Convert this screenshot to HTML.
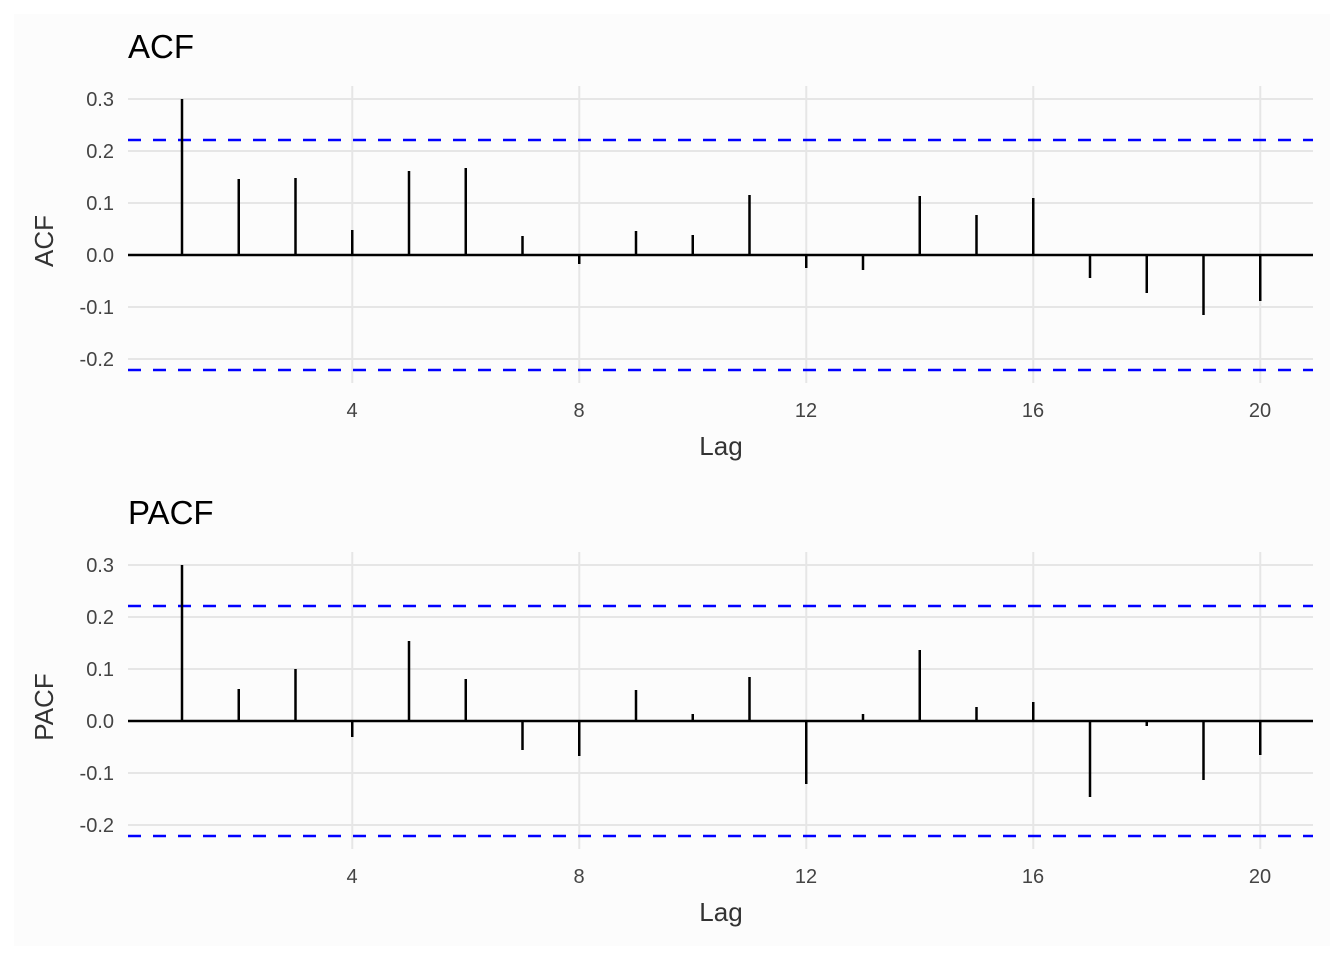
<!DOCTYPE html>
<html><head><meta charset="utf-8"><style>
html,body{margin:0;padding:0;background:#fff;}
svg{display:block;}
text{font-family:"Liberation Sans",sans-serif;}
</style></head><body>
<svg width="1344" height="960" viewBox="0 0 1344 960" xmlns="http://www.w3.org/2000/svg">
<rect x="0" y="0" width="1344" height="960" fill="#fff"/>
<rect x="14" y="14" width="1316" height="932" fill="#fcfcfc"/>
<defs>
<g id="grid">
  <g stroke="#e6e6e6" stroke-width="2">
    <line x1="128" x2="1313" y1="99" y2="99"/>
    <line x1="128" x2="1313" y1="151" y2="151"/>
    <line x1="128" x2="1313" y1="203" y2="203"/>
    <line x1="128" x2="1313" y1="307" y2="307"/>
    <line x1="128" x2="1313" y1="359" y2="359"/>
    <line x1="352.25" x2="352.25" y1="86" y2="383"/>
    <line x1="579.25" x2="579.25" y1="86" y2="383"/>
    <line x1="806.25" x2="806.25" y1="86" y2="383"/>
    <line x1="1033.25" x2="1033.25" y1="86" y2="383"/>
    <line x1="1260.25" x2="1260.25" y1="86" y2="383"/>
  </g>
  <g fill="#444" font-size="20" text-anchor="end">
    <text x="114" y="106">0.3</text>
    <text x="114" y="158">0.2</text>
    <text x="114" y="210">0.1</text>
    <text x="114" y="262">0.0</text>
    <text x="114" y="314">-0.1</text>
    <text x="114" y="366">-0.2</text>
  </g>
  <g fill="#444" font-size="20" text-anchor="middle">
    <text x="352" y="417">4</text>
    <text x="579" y="417">8</text>
    <text x="806" y="417">12</text>
    <text x="1033" y="417">16</text>
    <text x="1260" y="417">20</text>
  </g>
  <text x="721" y="455" fill="#333" font-size="26" text-anchor="middle">Lag</text>
  <g stroke="#0000ff" stroke-width="2.5" stroke-dasharray="13,12">
    <line x1="128" x2="1313" y1="140" y2="140"/>
    <line x1="128" x2="1313" y1="370" y2="370"/>
  </g>
</g>
</defs>

<!-- ACF -->
<use href="#grid"/>
<text x="128" y="58" fill="#000" font-size="33">ACF</text>
<text transform="translate(53,241) rotate(-90)" fill="#333" font-size="26" text-anchor="middle">ACF</text>
<g stroke="#000" stroke-width="2.5">
<line x1="182" x2="182" y1="255" y2="99"/>
<line x1="238.75" x2="238.75" y1="255" y2="179"/>
<line x1="295.5" x2="295.5" y1="255" y2="178"/>
<line x1="352.25" x2="352.25" y1="255" y2="230"/>
<line x1="409" x2="409" y1="255" y2="171"/>
<line x1="465.75" x2="465.75" y1="255" y2="168"/>
<line x1="522.5" x2="522.5" y1="255" y2="236"/>
<line x1="579.25" x2="579.25" y1="255" y2="264"/>
<line x1="636" x2="636" y1="255" y2="231"/>
<line x1="692.75" x2="692.75" y1="255" y2="235"/>
<line x1="749.5" x2="749.5" y1="255" y2="195"/>
<line x1="806.25" x2="806.25" y1="255" y2="268"/>
<line x1="863" x2="863" y1="255" y2="270"/>
<line x1="919.75" x2="919.75" y1="255" y2="196"/>
<line x1="976.5" x2="976.5" y1="255" y2="215"/>
<line x1="1033.25" x2="1033.25" y1="255" y2="198"/>
<line x1="1090" x2="1090" y1="255" y2="278"/>
<line x1="1146.75" x2="1146.75" y1="255" y2="293"/>
<line x1="1203.5" x2="1203.5" y1="255" y2="315"/>
<line x1="1260.25" x2="1260.25" y1="255" y2="301"/>
<line x1="128" x2="1313" y1="255" y2="255"/>
</g>

<!-- PACF -->
<use href="#grid" transform="translate(0,466)"/>
<text x="128" y="524" fill="#000" font-size="33">PACF</text>
<text transform="translate(53,707) rotate(-90)" fill="#333" font-size="26" text-anchor="middle">PACF</text>
<g stroke="#000" stroke-width="2.5">
<line x1="182" x2="182" y1="721" y2="565"/>
<line x1="238.75" x2="238.75" y1="721" y2="689"/>
<line x1="295.5" x2="295.5" y1="721" y2="669"/>
<line x1="352.25" x2="352.25" y1="721" y2="737"/>
<line x1="409" x2="409" y1="721" y2="641"/>
<line x1="465.75" x2="465.75" y1="721" y2="679"/>
<line x1="522.5" x2="522.5" y1="721" y2="750"/>
<line x1="579.25" x2="579.25" y1="721" y2="756"/>
<line x1="636" x2="636" y1="721" y2="690"/>
<line x1="692.75" x2="692.75" y1="721" y2="714"/>
<line x1="749.5" x2="749.5" y1="721" y2="677"/>
<line x1="806.25" x2="806.25" y1="721" y2="784"/>
<line x1="863" x2="863" y1="721" y2="714"/>
<line x1="919.75" x2="919.75" y1="721" y2="650"/>
<line x1="976.5" x2="976.5" y1="721" y2="707"/>
<line x1="1033.25" x2="1033.25" y1="721" y2="702"/>
<line x1="1090" x2="1090" y1="721" y2="797"/>
<line x1="1146.75" x2="1146.75" y1="721" y2="726"/>
<line x1="1203.5" x2="1203.5" y1="721" y2="780"/>
<line x1="1260.25" x2="1260.25" y1="721" y2="755"/>
<line x1="128" x2="1313" y1="721" y2="721"/>
</g>
</svg>
</body></html>
